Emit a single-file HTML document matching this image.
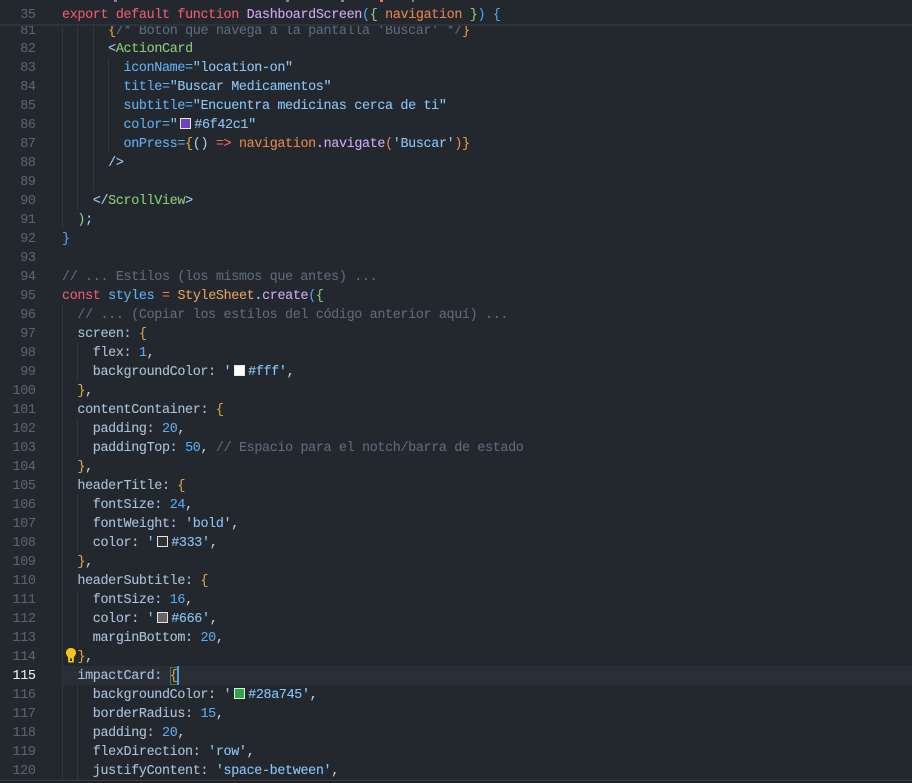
<!DOCTYPE html>
<html><head><meta charset="utf-8">
<style>
html,body{margin:0;padding:0;background:#23272e;}
#a{position:relative;width:912px;height:783px;overflow:hidden;background:#23272e;font-family:"Liberation Mono",monospace;font-size:13.4px;letter-spacing:-.345px;color:#abb2bf;-webkit-text-stroke:.1px;}
.l{position:absolute;left:0;height:19px;line-height:21px;white-space:pre;width:912px;}
.g{position:absolute;left:0;top:0;width:35.6px;text-align:right;color:#5a6270;}
.t{position:absolute;left:62px;top:0;}
.v{position:absolute;width:1px;background:#31363e;}
.k{color:#ef596f}.f{color:#d0a8f0}.y{color:#d7a13c}.o{color:#e5834a}.c{color:#5c6b7c}.p{color:#61afef}.b{color:#a7c7e7}.s{color:#89c4f4}.n{color:#59a9ef}.w{color:#a9c0d8}.j{color:#89ca78}.r{color:#e5c07b}.m{color:#4fa3e8}.u{color:#c8ccd4}
.q{display:inline-block;width:9px;height:9px;border:1px solid #e6e6e6;margin:0 3.3px 0 2.6px;vertical-align:-1px;}
</style></head><body><div id="a">
<div style="position:absolute;left:62px;top:666px;width:850px;height:19px;background:#2a2e36"></div>
<div class="v" style="left:62px;top:20px;height:209px"></div>
<div class="v" style="left:77px;top:20px;height:190px"></div>
<div class="v" style="left:93px;top:20px;height:171px"></div>
<div class="v" style="left:108px;top:58px;height:95px"></div>
<div class="v" style="left:62px;top:305px;height:475px"></div>
<div class="v" style="left:77px;top:343px;height:38px"></div>
<div class="v" style="left:77px;top:419px;height:38px"></div>
<div class="v" style="left:77px;top:495px;height:57px"></div>
<div class="v" style="left:77px;top:590px;height:57px"></div>
<div class="v" style="left:77px;top:685px;height:95px"></div>

<div class="l" style="top:21px"><span class="g">81</span><span class="t">      <span class="y">{</span><span class="c">/* Botón que navega a la pantalla 'Buscar' */</span><span class="y">}</span></span></div>
<div class="l" style="top:39px"><span class="g">82</span><span class="t">      <span class="b">&lt;</span><span class="j">ActionCard</span></span></div>
<div class="l" style="top:58px"><span class="g">83</span><span class="t">        <span class="p">iconName=</span><span class="s">"location-on"</span></span></div>
<div class="l" style="top:77px"><span class="g">84</span><span class="t">        <span class="p">title=</span><span class="s">"Buscar Medicamentos"</span></span></div>
<div class="l" style="top:96px"><span class="g">85</span><span class="t">        <span class="p">subtitle=</span><span class="s">"Encuentra medicinas cerca de ti"</span></span></div>
<div class="l" style="top:115px"><span class="g">86</span><span class="t">        <span class="p">color=</span><span class="s">"<i class="q" style="background:#6f42c1"></i>#6f42c1"</span></span></div>
<div class="l" style="top:134px"><span class="g">87</span><span class="t">        <span class="p">onPress=</span><span class="y">{</span><span class="b">() </span><span class="o" style="color:#e8705a">=&gt;</span> <span class="o">navigation</span><span class="b">.</span><span class="f">navigate</span><span class="o">(</span><span class="s">'Buscar'</span><span class="o">)</span><span class="y">}</span></span></div>
<div class="l" style="top:153px"><span class="g">88</span><span class="t">      <span class="b">/&gt;</span></span></div>
<div class="l" style="top:172px"><span class="g">89</span></div>
<div class="l" style="top:191px"><span class="g">90</span><span class="t">    <span class="b">&lt;/</span><span class="j">ScrollView</span><span class="b">&gt;</span></span></div>
<div class="l" style="top:210px"><span class="g">91</span><span class="t">  <span class="j">)</span><span class="b">;</span></span></div>
<div class="l" style="top:229px"><span class="g">92</span><span class="t"><span class="m">}</span></span></div>
<div class="l" style="top:248px"><span class="g">93</span></div>
<div class="l" style="top:267px"><span class="g">94</span><span class="t"><span class="c">// ... Estilos (los mismos que antes) ...</span></span></div>
<div class="l" style="top:286px"><span class="g">95</span><span class="t"><span class="k">const</span> <span class="p">styles</span> <span class="o">=</span> <span class="r" style="color:#e5a05a">StyleSheet</span><span class="b">.</span><span class="f">create</span><span class="m">(</span><span class="j">{</span></span></div>
<div class="l" style="top:305px"><span class="g">96</span><span class="t">  <span class="c">// ... (Copiar los estilos del código anterior aquí) ...</span></span></div>
<div class="l" style="top:324px"><span class="g">97</span><span class="t">  <span class="w">screen:</span> <span class="y">{</span></span></div>
<div class="l" style="top:343px"><span class="g">98</span><span class="t">    <span class="w">flex:</span> <span class="n">1</span><span class="u">,</span></span></div>
<div class="l" style="top:362px"><span class="g">99</span><span class="t">    <span class="w">backgroundColor:</span> <span class="s">'<i class="q" style="background:#fff"></i>#fff'</span><span class="u">,</span></span></div>
<div class="l" style="top:381px"><span class="g">100</span><span class="t">  <span class="y">}</span><span class="u">,</span></span></div>
<div class="l" style="top:400px"><span class="g">101</span><span class="t">  <span class="w">contentContainer:</span> <span class="y">{</span></span></div>
<div class="l" style="top:419px"><span class="g">102</span><span class="t">    <span class="w">padding:</span> <span class="n">20</span><span class="u">,</span></span></div>
<div class="l" style="top:438px"><span class="g">103</span><span class="t">    <span class="w">paddingTop:</span> <span class="n">50</span><span class="u">,</span> <span class="c">// Espacio para el notch/barra de estado</span></span></div>
<div class="l" style="top:457px"><span class="g">104</span><span class="t">  <span class="y">}</span><span class="u">,</span></span></div>
<div class="l" style="top:476px"><span class="g">105</span><span class="t">  <span class="w">headerTitle:</span> <span class="y">{</span></span></div>
<div class="l" style="top:495px"><span class="g">106</span><span class="t">    <span class="w">fontSize:</span> <span class="n">24</span><span class="u">,</span></span></div>
<div class="l" style="top:514px"><span class="g">107</span><span class="t">    <span class="w">fontWeight:</span> <span class="s">'bold'</span><span class="u">,</span></span></div>
<div class="l" style="top:533px"><span class="g">108</span><span class="t">    <span class="w">color:</span> <span class="s">'<i class="q" style="background:#333"></i>#333'</span><span class="u">,</span></span></div>
<div class="l" style="top:552px"><span class="g">109</span><span class="t">  <span class="y">}</span><span class="u">,</span></span></div>
<div class="l" style="top:571px"><span class="g">110</span><span class="t">  <span class="w">headerSubtitle:</span> <span class="y">{</span></span></div>
<div class="l" style="top:590px"><span class="g">111</span><span class="t">    <span class="w">fontSize:</span> <span class="n">16</span><span class="u">,</span></span></div>
<div class="l" style="top:609px"><span class="g">112</span><span class="t">    <span class="w">color:</span> <span class="s">'<i class="q" style="background:#666"></i>#666'</span><span class="u">,</span></span></div>
<div class="l" style="top:628px"><span class="g">113</span><span class="t">    <span class="w">marginBottom:</span> <span class="n">20</span><span class="u">,</span></span></div>
<div class="l" style="top:647px"><span class="g">114</span><span class="t">  <span class="y">}</span><span class="u">,</span></span></div>
<div class="l" style="top:666px"><span class="g" style="color:#e4e8ee">115</span><span class="t">  <span class="w">impactCard:</span> <span class="y">{</span></span></div>
<div class="l" style="top:685px"><span class="g">116</span><span class="t">    <span class="w">backgroundColor:</span> <span class="s">'<i class="q" style="background:#28a745"></i>#28a745'</span><span class="u">,</span></span></div>
<div class="l" style="top:704px"><span class="g">117</span><span class="t">    <span class="w">borderRadius:</span> <span class="n">15</span><span class="u">,</span></span></div>
<div class="l" style="top:723px"><span class="g">118</span><span class="t">    <span class="w">padding:</span> <span class="n">20</span><span class="u">,</span></span></div>
<div class="l" style="top:742px"><span class="g">119</span><span class="t">    <span class="w">flexDirection:</span> <span class="s">'row'</span><span class="u">,</span></span></div>
<div class="l" style="top:761px"><span class="g">120</span><span class="t">    <span class="w">justifyContent:</span> <span class="s">'space-between'</span><span class="u">,</span></span></div>

<div style="position:absolute;left:170px;top:667px;width:6px;height:16px;border:1px solid #3d7a4c"></div>
<div style="position:absolute;left:177px;top:666px;width:2px;height:19px;background:#4f9fe8"></div>

<svg style="position:absolute;left:65px;top:647px" width="12" height="17" viewBox="0 0 12 17">
<path d="M6 1C3 1 1 3 1 5.8c0 2.2 1.4 3.300 2.200 4.700V13h5.600v-2.500C9.600 9.100 11 8 11 5.800 11 3 9 1 6 1z" fill="#f5c518"/>
<rect x="3.200" y="11.500" width="5.600" height="4" fill="#f5c518"/>
<rect x="5" y="11.500" width="2" height="2.500" fill="#23272e"/>
</svg>

<div style="position:absolute;left:0;top:0;width:912px;height:24px;background:#23272e"></div>
<div style="position:absolute;left:0;top:24px;width:912px;height:2px;background:#2e333b"></div>
<div class="l" style="top:5px"><span class="g">35</span><span class="t"><span class="k">export</span> <span class="k">default</span> <span class="k">function</span> <span class="f">DashboardScreen</span><span class="m">(</span><span class="j">{</span> <span class="o">navigation</span> <span class="j">}</span><span class="m">)</span> <span class="m">{</span></span></div>
<div style="position:absolute;left:114px;top:0;width:3px;height:2px;background:#7d8794"></div>
<div style="position:absolute;left:286px;top:0;width:3px;height:2px;background:#7d8794"></div>
<div style="position:absolute;left:341px;top:0;width:3px;height:2px;background:#7d8794"></div>
<div style="position:absolute;left:380px;top:0;width:3px;height:2px;background:#e5834a"></div>
<div style="position:absolute;left:412px;top:0;width:2px;height:2px;background:#7d8794"></div>

<div style="position:absolute;left:0;top:780px;width:912px;height:1px;background:#3a3f47"></div>
<div style="position:absolute;left:0;top:781px;width:912px;height:2px;background:#1d2025"></div>
</div></body></html>
